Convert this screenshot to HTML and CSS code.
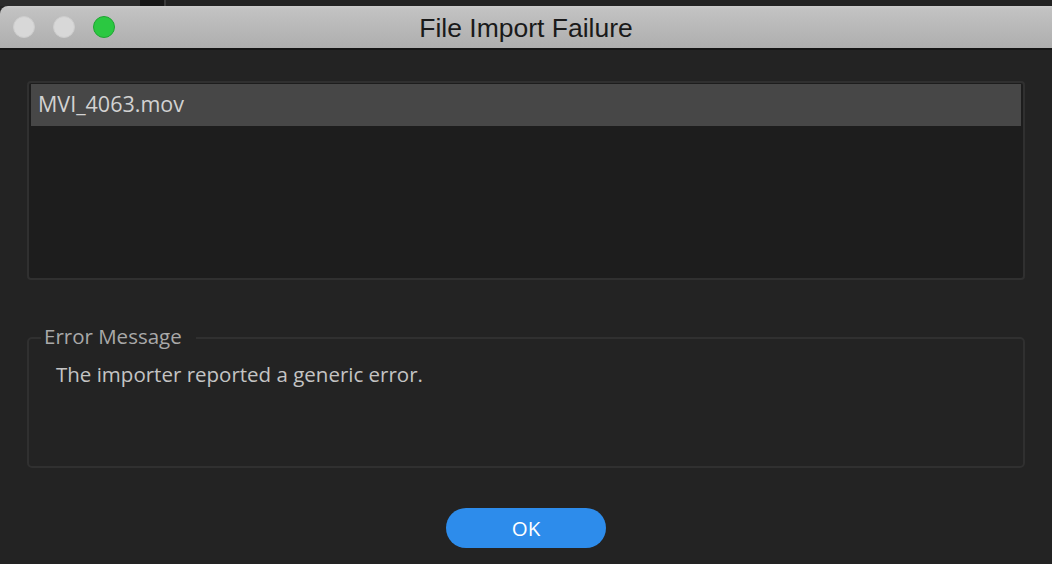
FILE: index.html
```html
<!DOCTYPE html>
<html>
<head>
<meta charset="utf-8">
<link rel="stylesheet" href="styles.css">
</head>
<body>
<div class="strip">
  <div class="seg seg-a"></div>
  <div class="seg seg-b"></div>
  <div class="seg seg-c"></div>
  <div class="seg seg-d"></div>
</div>
<div class="window">
  <div class="titlebar">
    <div class="lights">
      <span class="light gray"></span>
      <span class="light gray"></span>
      <span class="light green"></span>
    </div>
    <div class="title">File Import Failure</div>
  </div>
  <div class="content">
    <div class="listbox">
      <div class="row selected">MVI_4063.mov</div>
    </div>
    <fieldset class="errbox">
      <legend>Error Message</legend>
      <div class="msg">The importer reported a generic error.</div>
    </fieldset>
    <div class="actions">
      <button class="ok">OK</button>
    </div>
  </div>
</div>
</body>
</html>
```

FILE: styles.css
```css
html, body {
  margin: 0;
  padding: 0;
  background: #232323;
  overflow: hidden;
}
body {
  width: 1052px;
  height: 564px;
  font-family: "Open Sans", "Liberation Sans", sans-serif;
}
.strip {
  display: flex;
  height: 6px;
}
.seg-a { width: 140px; background: #2b2b2b; }
.seg-b { width: 24px; background: #161616; }
.seg-c { width: 2px; background: #3a3a3a; }
.seg-d { flex: 1; background: #222222; }

.window {
  background: #232323;
}
.titlebar {
  position: relative;
  height: 42px;
  border-top-left-radius: 8px;
  background: linear-gradient(#cbcbcb 0px, #c2c2c2 3px, #aeaeae 100%);
  border-bottom: 2px solid #151515;
  display: flex;
  align-items: center;
  justify-content: center;
}
.lights {
  position: absolute;
  left: 13px;
  top: 10px;
  display: flex;
  gap: 18px;
}
.light {
  width: 22px;
  height: 22px;
  border-radius: 50%;
  box-sizing: border-box;
}
.light.gray {
  background: #d8d8d8;
  border: 1px solid #cdcdcd;
}
.light.green {
  background: #2bc841;
  border: 1px solid #1ea531;
}
.title {
  font-family: "Liberation Sans", Arial, sans-serif;
  font-size: 26.5px;
  color: #1a1a1a;
  padding-top: 3px;
}

.content {
  padding: 31px 27px 0 27px;
}
.listbox {
  height: 193px;
  border: 2px solid #303030;
  border-radius: 4px;
  background: #1d1d1d;
  padding: 1px 2px;
}
.row {
  height: 42px;
  line-height: 40px;
  padding-left: 7px;
  font-size: 21.5px;
  color: #d2d2d2;
}
.row.selected {
  background: #474747;
}

.errbox {
  margin: 44px 0 0 0;
  padding: 0 0 0 12px;
  height: 144px;
  box-sizing: border-box;
  border: 2px solid #303030;
  border-radius: 5px;
}
.errbox legend {
  font-size: 20.5px;
  color: #a9a9a9;
  padding: 0 14px 4px 3px;
  margin-left: 0;
  line-height: 24px;
}
.msg {
  font-size: 20.5px;
  color: #c4c4c4;
  line-height: 26px;
  margin-top: 9px;
  padding-left: 15px;
}

.actions {
  display: flex;
  justify-content: center;
  padding-top: 40px;
}
.ok {
  width: 160px;
  height: 40px;
  border: none;
  border-radius: 20px;
  background: #2d8ceb;
  color: #ffffff;
  font-family: "Open Sans", "Liberation Sans", sans-serif;
  font-size: 20.5px;
  padding: 0;
}
```
